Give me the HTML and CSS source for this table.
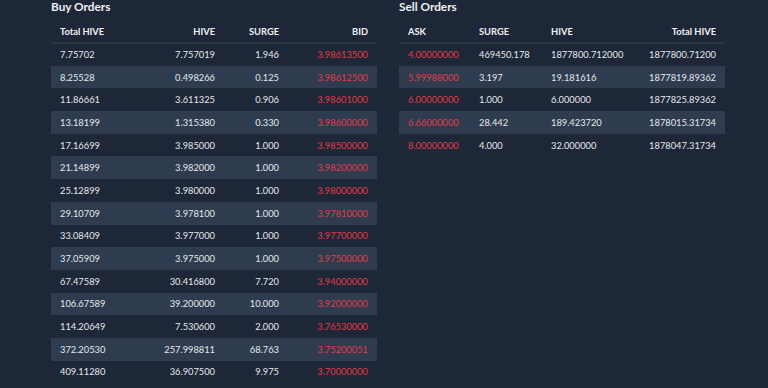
FILE: index.html
```html
<!DOCTYPE html>
<html>
<head>
<meta charset="utf-8">
<link rel="stylesheet" href="styles.css">
</head>
<body>
<div class="wrap">
  <section class="panel">
    <h2 class="title">Buy Orders</h2>
    <table class="orders buy">
      <colgroup><col class="b1"><col class="b2"><col class="b3"><col class="b4"></colgroup>
      <thead><tr><th class="l">Total HIVE</th><th class="r">HIVE</th><th class="r">SURGE</th><th class="r">BID</th></tr></thead>
      <tbody>
        <tr><td class="l">7.75702</td><td class="r">7.757019</td><td class="r">1.946</td><td class="r red">3.98613500</td></tr>
        <tr><td class="l">8.25528</td><td class="r">0.498266</td><td class="r">0.125</td><td class="r red">3.98612500</td></tr>
        <tr><td class="l">11.86661</td><td class="r">3.611325</td><td class="r">0.906</td><td class="r red">3.98601000</td></tr>
        <tr><td class="l">13.18199</td><td class="r">1.315380</td><td class="r">0.330</td><td class="r red">3.98600000</td></tr>
        <tr><td class="l">17.16699</td><td class="r">3.985000</td><td class="r">1.000</td><td class="r red">3.98500000</td></tr>
        <tr><td class="l">21.14899</td><td class="r">3.982000</td><td class="r">1.000</td><td class="r red">3.98200000</td></tr>
        <tr><td class="l">25.12899</td><td class="r">3.980000</td><td class="r">1.000</td><td class="r red">3.98000000</td></tr>
        <tr><td class="l">29.10709</td><td class="r">3.978100</td><td class="r">1.000</td><td class="r red">3.97810000</td></tr>
        <tr><td class="l">33.08409</td><td class="r">3.977000</td><td class="r">1.000</td><td class="r red">3.97700000</td></tr>
        <tr><td class="l">37.05909</td><td class="r">3.975000</td><td class="r">1.000</td><td class="r red">3.97500000</td></tr>
        <tr><td class="l">67.47589</td><td class="r">30.416800</td><td class="r">7.720</td><td class="r red">3.94000000</td></tr>
        <tr><td class="l">106.67589</td><td class="r">39.200000</td><td class="r">10.000</td><td class="r red">3.92000000</td></tr>
        <tr><td class="l">114.20649</td><td class="r">7.530600</td><td class="r">2.000</td><td class="r red">3.76530000</td></tr>
        <tr><td class="l">372.20530</td><td class="r">257.998811</td><td class="r">68.763</td><td class="r red">3.75200051</td></tr>
        <tr><td class="l">409.11280</td><td class="r">36.907500</td><td class="r">9.975</td><td class="r red">3.70000000</td></tr>
      </tbody>
    </table>
  </section>
  <section class="panel">
    <h2 class="title">Sell Orders</h2>
    <table class="orders sell">
      <colgroup><col class="s1"><col class="s2"><col class="s3"><col class="s4"></colgroup>
      <thead><tr><th class="l">ASK</th><th class="l">SURGE</th><th class="l">HIVE</th><th class="r">Total HIVE</th></tr></thead>
      <tbody>
        <tr><td class="l red">4.00000000</td><td class="l">469450.178</td><td class="l">1877800.712000</td><td class="r">1877800.71200</td></tr>
        <tr><td class="l red">5.99988000</td><td class="l">3.197</td><td class="l">19.181616</td><td class="r">1877819.89362</td></tr>
        <tr><td class="l red">6.00000000</td><td class="l">1.000</td><td class="l">6.000000</td><td class="r">1877825.89362</td></tr>
        <tr><td class="l red">6.66000000</td><td class="l">28.442</td><td class="l">189.423720</td><td class="r">1878015.31734</td></tr>
        <tr><td class="l red">8.00000000</td><td class="l">4.000</td><td class="l">32.000000</td><td class="r">1878047.31734</td></tr>
      </tbody>
    </table>
  </section>
</div>
</body>
</html>
```
FILE: styles.css
```css
html, body {
  margin: 0;
  padding: 0;
  background: #1e2738;
  height: 100%;
  overflow: hidden;
}
body {
  font-family: Lato, "Noto Sans", sans-serif;
  color: #e6e9ed;
}
.wrap {
  display: flex;
  gap: 22px;
  padding-left: 51px;
}
.panel {
  width: 326px;
}
.title {
  margin: 0 0 7px 0;
  font-size: 11.8px;
  line-height: 14px;
  font-weight: 700;
  color: #eef0f3;
}
.orders {
  width: 326px;
  border-collapse: collapse;
  table-layout: fixed;
  font-size: 9.3px;
}
.orders th {
  font-weight: 700;
  height: 21px;
  padding: 0 9px;
  border-bottom: 2px solid #2b3546;
  color: #eef0f3;
}
.orders td {
  height: 22.7px;
  padding: 0 9px;
  box-sizing: border-box;
}
.orders tbody tr:nth-child(even) {
  background: #2f3c4f;
}
.l { text-align: left; }
.r { text-align: right; }
.red { color: #e23b47; }
.b1 { width: 90px; }
.b2 { width: 83px; }
.b3 { width: 64px; }
.b4 { width: 89px; }
.s1 { width: 71px; }
.s2 { width: 72px; }
.s3 { width: 98px; }
.s4 { width: 85px; }
```
